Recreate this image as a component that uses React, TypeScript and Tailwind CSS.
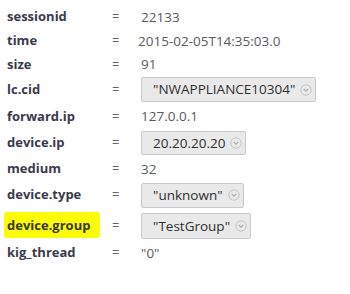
import { ReactNode } from "react";

const Chevron = () => (
  <svg width="12" height="12" viewBox="0 0 12 12" className="shrink-0">
    <circle cx="6" cy="6" r="5.2" fill="none" stroke="#c4c4c4" strokeWidth="1" />
    <path d="M3.8 5 L6 7.1 L8.2 5" fill="none" stroke="#b0b0b0" strokeWidth="1.2" />
  </svg>
);

const Pill = ({ children, h = "h-[25px]" }: { children: ReactNode; h?: string }) => (
  <div
    className={`inline-flex items-center ${h} pl-[11px] pr-[3px] gap-[5px] border border-[#c9c9c9] rounded-[2px] bg-[#e9e9e9] text-[#2f2f2f] text-[13.5px]`}
  >
    <span>{children}</span>
    <Chevron />
  </div>
);

type Row = { label: string; value: ReactNode; h: string; mark?: boolean };

const rows: Row[] = [
  { label: "sessionid", value: <span>22133</span>, h: "h-[24px]" },
  { label: "time", value: <span className="-ml-[3px]">2015-02-05T14:35:03.0</span>, h: "h-[24px]" },
  { label: "size", value: <span>91</span>, h: "h-[23px]" },
  { label: "lc.cid", value: <Pill>"NWAPPLIANCE10304"</Pill>, h: "h-[27px]" },
  { label: "forward.ip", value: <span>127.0.0.1</span>, h: "h-[27px]" },
  { label: "device.ip", value: <Pill h="h-[24px]">20.20.20.20</Pill>, h: "h-[26px]" },
  { label: "medium", value: <span>32</span>, h: "h-[26px]" },
  { label: "device.type", value: <Pill>"unknown"</Pill>, h: "h-[26px]" },
  { label: "device.group", value: <Pill h="h-[26px]">"TestGroup"</Pill>, h: "h-[36px]", mark: true },
  { label: "kig_thread", value: <span>"0"</span>, h: "h-[18px]" },
];

export default function App() {
  return (
    <div
      className="w-[350px] h-[294px] bg-white pt-[5px] pl-[7px]"
      style={{ fontFamily: '"Open Sans", "Noto Sans", sans-serif' }}
    >
      {rows.map((r) => (
        <div key={r.label} className={`flex items-center ${r.h}`}>
          <div className="w-[105px] text-[13px] font-bold text-[#3a3a4c]">
            {r.mark ? (
              <span className="-ml-[3px] pl-[3px] pr-[10px] py-[4px] bg-[#fbfb0a] rounded-[3px] text-[#38381c]">
                {r.label}
              </span>
            ) : (
              r.label
            )}
          </div>
          <div className="w-[29px] text-[13px] text-[#666]">=</div>
          <div className="text-[13.5px] text-[#5a5a5a]">{r.value}</div>
        </div>
      ))}
    </div>
  );
}
